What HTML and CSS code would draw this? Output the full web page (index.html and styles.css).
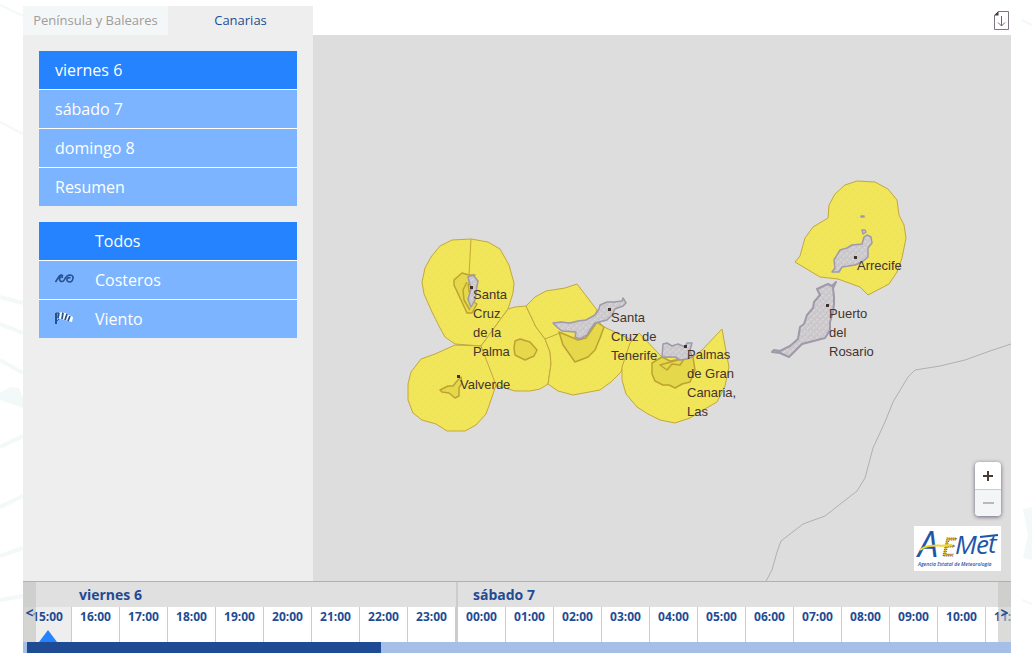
FILE: index.html
```html
<!DOCTYPE html>
<html lang="es">
<head>
<meta charset="utf-8">
<title>Avisos meteorológicos - Canarias</title>
<link rel="stylesheet" href="styles.css">
</head>
<body>
<svg class="backdrop" width="1032" height="667" viewBox="0 0 1032 667" aria-hidden="true">
  <g fill="none" stroke="#f3f8f8" stroke-width="4">
    <path d="M0 360 23 373M0 447 23 436M0 507 23 496M0 556 23 548M0 600 23 596M0 297 23 303M0 324 23 333"/>
    <path d="M0 5 23 16M0 122 23 134M1022 20 1032 25M1022 600 1032 604" stroke-width="2"/>
  </g>
  <path d="M0 393 10 387 19 388 23 398 23 408 0 400zM1023 509 1032 507 1032 560 1023 558 1028 535z" fill="#f3f8f8"/>
</svg>
<main class="viewer">
  <header class="top">
    <nav class="tabs">
      <a class="tab" href="#peninsula">Península y Baleares</a>
      <a class="tab tab-active" href="#canarias">Canarias</a>
    </nav>
    <button class="download" aria-label="Descargar">
      <svg width="15" height="20" viewBox="0 0 15 20"><path d="M4.500.5h10v18H.5v-14z" fill="#fff" stroke="#7d7585"/><path d="M0 4.500 4.500 0v4.500z" fill="#4a3a33"/><path d="M7.500 5v10M4 11.500l3.500 3.500 3.500-3.500" fill="none" stroke="#6b6375"/></svg>
    </button>
  </header>
  <div class="content">
    <aside class="sidebar">
      <div class="menu">
        <button class="item item-active">viernes 6</button>
        <button class="item">sábado 7</button>
        <button class="item">domingo 8</button>
        <button class="item">Resumen</button>
      </div>
      <div class="menu">
        <button class="item item-active"><span class="icon"></span>Todos</button>
        <button class="item"><span class="icon"><svg width="20" height="12" viewBox="0 0 20 12"><g fill="none" stroke="#24518f" stroke-width="1.600"><path d="M.5 9 4 3.500Q6 1 8 3M8 4.500Q5 3 4.500 6 5 9 7.500 8.500 9 8 10 5.500 12 2 15 2 18.500 2.500 18 5 17.500 9 14.500 9 11.500 8.500 12 6 13 4 15.500 5"/></g></svg></span>Costeros</button>
        <button class="item"><span class="icon"><svg width="20" height="12" viewBox="0 0 20 12"><path d="M1 1v11" stroke="#24518f" stroke-width="2"/><path d="M3 1 8 0l10 5-1 5L3 6z" fill="#fff"/><path d="M4 1 3 6M8 .5 7 7M12 2l-2 6M15 4l-2 5" stroke="#24518f" stroke-width="1.800"/><path d="M1 1l3 0M1 10l3-3" stroke="#24518f"/></svg></span>Viento</button>
      </div>
    </aside>
    <section class="map" aria-label="Mapa de avisos">
      <svg class="chart" viewBox="313 35 698 546" preserveAspectRatio="xMidYMid slice">
        <defs>
          <pattern id="relief" width="6" height="6" patternUnits="userSpaceOnUse"><path d="M0 0h6v6H0z" fill="#cccacd"/><path d="M0 2l2-1M3 5l2-2" stroke="#dcdcdc"/><path d="M4 1h1M1 5h1" stroke="#bfbbc4"/></pattern>
          <pattern id="dots" width="8" height="8" patternUnits="userSpaceOnUse"><path d="M0 0h8v8H0z" fill="#f1e55a"/><path d="M1 1h1v1H1zM5 5h1v1H5z" fill="#e9da55"/></pattern>
        </defs>
        <path class="coast" d="M1011 344 990 351 965 360 940 366 915 370 908 377 893 402 885 422 873 448 865 478 857 491 825 516 803 524 781 541 777 552 772 570 766 581"/>
        <g class="zone">
          <path d="M471 239 452 240 440 246 431 257 425 268 422 282 424 294 432 312 440 328 445 337 455 344 481 346 508 309 513 293 514 283 509 265 500 249 488 242z"/>
          <path d="M508 309 515 307 526 306 536 327 545 339 550 352 551 364 548 384 540 389 530 391 515 391 495 385 484 356 481 346z"/>
          <path d="M481 346 455 345 435 354 421 359 411 372 408 384 408 400 413 413 422 420 436 424 447 431 465 431 476 425 486 414 491 400 496 385z"/>
          <path d="M526 306 535 297 546 291 565 288 577 284 597 310 595 315 602 326 632 340 621 372 611 382 600 390 573 395 558 391 548 384 551 364 550 352 545 339 536 327z"/>
          <path d="M639 333 630 343 622 367 622 380 626 394 637 407 648 414 660 420 675 423 690 418 703 410 717 402 725 386 729 367 726 351 722 329 702 350 693 357 662 357z"/>
          <path d="M795 262 800 256 805 238 813 227 828 218 829 205 835 194 845 185 857 181 875 182 888 189 897 200 899 215 904 225 906 238 902 258 897 272 889 284 868 295 860 287 838 279 820 277z"/>
          <path d="M471 239 469 275M545 339 560 333" fill="none"/>
        </g>
        <g class="warned">
          <path d="M469 275 462 273 454 280 454 285 467 313 472 313 477 304 471 300 468 285 475 275z"/>
          <path d="M467 282 463 290 464 300 470 310"/>
          <path d="M515 341 520 339 530 342 537 350 534 356 525 360 515 355 514 348z"/>
          <path d="M440 390 448 386 453 386 457 381 461 377 462 383 459 388 459 396 455 398 449 393 442 392z"/>
          <path d="M559 332 578 340 586 338 597 322 604 327 600 338 595 350 588 357 575 362 568 352 563 345z"/>
          <path d="M662 357 652 363 652 374 655 381 663 385 669 385 675 388 682 384 690 382 695 370 693 357 670 361z"/>
          <path d="M660 365 678 360 684 359 680 365 672 364 667 370z"/>
        </g>
        <g class="land">
          <path d="M468 277 473 275 478 281 477 286 475 300 471 307 468 299 471 289z"/>
          <path d="M553 323 561 322 570 323 578 321 586 320 595 315 599 309 600 305 607 302 614 302 622 301 623 298 626 303 623 306 615 309 612 315 607 320 595 323 590 330 587 335 580 339 575 337 576 332 562 331 558 328z"/>
          <path d="M663 344 667 343 672 346 678 344 685 347 687 343 692 343 690 350 692 357 687 359 680 360 675 357 662 357z"/>
          <path d="M832 272 835 268 834 260 840 250 847 248 852 245 862 244 864 237 867 235 871 237 872 243 868 248 868 257 862 262 855 265 842 267 839 272z"/>
          <path class="fuerteventura" d="M817 289 828 284 832 286 836 282 833 288 834 297 834 304 833 312 830 322 830 330 825 338 802 344 789 357 780 353 772 352 774 350 780 351 790 346 798 339 800 327 804 324 807 315 813 308 814 302 820 295z"/>
          <path d="M861 216h3v1h-3zM862 230l3 0 1 2-3 2z"/>
        </g>
        <g class="city-dot"><path d="M470 286h3v3h-3zM457 375h3v3h-3zM608 308h3v3h-3zM684 345h3v3h-3zM854 256h3v3h-3zM826 304h3v3h-3z"/></g>
        <g class="city">
          <text><tspan x="473" y="299">Santa</tspan><tspan x="473" y="318">Cruz</tspan><tspan x="473" y="337">de la</tspan><tspan x="473" y="356">Palma</tspan></text>
          <text x="460" y="389">Valverde</text>
          <text><tspan x="611" y="322">Santa</tspan><tspan x="611" y="341">Cruz de</tspan><tspan x="611" y="360">Tenerife</tspan></text>
          <text><tspan x="687" y="359">Palmas</tspan><tspan x="687" y="378">de Gran</tspan><tspan x="687" y="397">Canaria,</tspan><tspan x="687" y="416">Las</tspan></text>
          <text x="857" y="270">Arrecife</text>
          <text><tspan x="829" y="318">Puerto</tspan><tspan x="829" y="337">del</tspan><tspan x="829" y="356">Rosario</tspan></text>
        </g>
      </svg>
      <div class="overlay">
        <div class="zoom">
          <button class="zoom-in" aria-label="Acercar"><svg width="12" height="12" viewBox="0 0 12 12"><path d="M6 1v10M1 6h10" stroke="#4a3a33" stroke-width="2"/></svg></button>
          <button class="zoom-out" aria-label="Alejar"><svg width="12" height="12" viewBox="0 0 12 12"><path d="M1 6h11" stroke="#bdb8b8" stroke-width="2"/></svg></button>
        </div>
        <svg class="logo" width="87" height="45" viewBox="0 0 87 45" role="img" aria-label="AEMet">
          <path d="M0 0h87v45H0z" fill="#fff"/>
          <g class="logo-name"><text x="4" y="31" class="logo-a">A</text><text x="28" y="30" class="logo-e">E</text><text x="41" y="28">M</text><text x="62" y="28">e</text><text x="74" y="27">t</text></g>
          <path d="M66 11 84 9" stroke="#1f55a8" stroke-width="2"/>
          <path d="M6 24C15 17 24 21 38 19" fill="none" stroke="#f0d62c" stroke-width="2"/>
          <text class="logo-caption" x="4" y="40">Agencia Estatal de Meteorología</text>
        </svg>
      </div>
    </section>
  </div>
  <section class="timeline" aria-label="Horas">
    <div class="track">
      <div class="day day-first">
        <h2 class="day-name">viernes 6</h2>
        <div class="hours"><button class="hour hour-now">15:00</button><button class="hour">16:00</button><button class="hour">17:00</button><button class="hour">18:00</button><button class="hour">19:00</button><button class="hour">20:00</button><button class="hour">21:00</button><button class="hour">22:00</button><button class="hour">23:00</button></div>
      </div>
      <div class="day">
        <h2 class="day-name">sábado 7</h2>
        <div class="hours"><button class="hour">00:00</button><button class="hour">01:00</button><button class="hour">02:00</button><button class="hour">03:00</button><button class="hour">04:00</button><button class="hour">05:00</button><button class="hour">06:00</button><button class="hour">07:00</button><button class="hour">08:00</button><button class="hour">09:00</button><button class="hour">10:00</button><button class="hour">11:00</button></div>
      </div>
    </div>
    <button class="step step-prev">&lt;</button>
    <button class="step step-next">&gt;</button>
    <div class="scrollbar"><div class="thumb"></div></div>
  </section>
</main>
</body>
</html>
```
FILE: styles.css
```css
* { box-sizing: border-box; }
body {
  margin: 0;
  background: #fff;
  font-family: "Open Sans", "Noto Sans", sans-serif;
  overflow-x: hidden;
}
button {
  margin: 0;
  padding: 0;
  border: 0;
  background: none;
  font: inherit;
  color: inherit;
  cursor: pointer;
}
svg { display: block; }
.backdrop { position: absolute; top: 0; left: 0; z-index: -1; }
.viewer { margin: 6px 21px 0 23px; background: #fff; }
.top { display: flex; justify-content: space-between; align-items: flex-start; }
.tabs { display: flex; width: 290px; }
.tab {
  flex: 1;
  height: 29px;
  background: #f4f7f7;
  color: #a29b9b;
  font-size: 13px;
  line-height: 29px;
  text-align: center;
  text-decoration: none;
  white-space: nowrap;
}
.tab-active { background: #eee; color: #1f4b94; }
.download { padding: 5px 2px 0 0; }
.content { display: flex; }
.sidebar {
  display: flex;
  flex-direction: column;
  gap: 16px;
  flex: none;
  width: 290px;
  padding: 16px;
  background: #eee;
}
.menu { display: flex; flex-direction: column; gap: 1px; background: #fff; }
.item {
  display: flex;
  align-items: center;
  height: 38px;
  padding: 0 16px;
  background: #7cb4ff;
  color: #fff;
  font-size: 16px;
  text-align: left;
}
.item-active { background: #2583ff; }
.icon { width: 40px; padding-bottom: 2px; }
.map { position: relative; flex: 1; min-width: 0; background: #ddd; }
.chart { width: 100%; height: auto; }
.coast { fill: none; stroke: #b0b0b0; }
.zone { fill: url(#dots); stroke: #c2a83c; stroke-linejoin: round; }
.warned { fill: #e5d84b; stroke: #bda232; stroke-width: 1.5; stroke-linejoin: round; }
.land { fill: url(#relief); stroke: #9f99aa; stroke-width: 1.5; stroke-linejoin: round; }
.fuerteventura { stroke-width: 2; }
.city-dot { fill: #403029; }
.city { fill: #43342d; font: 13px "Liberation Sans", Arial, sans-serif; }
.overlay {
  position: absolute;
  right: 10px;
  bottom: 10px;
  display: flex;
  flex-direction: column;
  align-items: flex-end;
  gap: 10px;
}
.zoom {
  display: flex;
  flex-direction: column;
  width: 26px;
  border-radius: 4px;
  background: #fff;
  box-shadow: 0 1px 4px #6b6078;
  overflow: hidden;
}
.zoom button { display: flex; align-items: center; justify-content: center; height: 27px; }
.zoom .zoom-out { border-top: 1px solid #ccc; background: #f3f6f6; }
.logo-name { fill: #1f55a8; font: italic 26px "Open Sans", sans-serif; }
.logo-name .logo-a { font-size: 36px; }
.logo-name .logo-e { fill: #e0c52c; stroke: #5a4a2c; stroke-width: 1; stroke-dasharray: 1 1; }
.logo-caption { fill: #1f55a8; font: italic 600 5px "Open Sans", sans-serif; }
.timeline {
  position: relative;
  border-top: 1px solid #b5afad;
  background: #e0e0e0;
  color: #1f4b94;
  font-weight: 700;
  overflow: hidden;
}
.track { display: flex; padding-left: 1px; }
.day { flex: none; }
.day-first { border-right: 2px solid #ccc; }
.day-name { margin: 0; padding-left: 15px; font-size: 14px; font-weight: 700; line-height: 25px; }
.day-first .day-name { padding-left: 55px; }
.hours { display: flex; }
.hour {
  display: flex;
  flex-direction: column;
  align-items: center;
  width: 48px;
  height: 35px;
  border-right: 1px solid #ccc;
  background: #fff;
  font-size: 12px;
  line-height: 20px;
}
.hour-now { background: #eee; }
.hour-now::after {
  content: "";
  margin-top: auto;
  border: 9px solid transparent;
  border-top: 0;
  border-bottom: 12px solid #2583ff;
}
.step {
  position: absolute;
  top: 0;
  bottom: 11px;
  width: 13px;
  background: rgba(195, 195, 193, 0.6);
  font-size: 14px;
}
.step-prev { left: 0; }
.step-next { right: 0; }
.scrollbar { height: 11px; padding-left: 4px; background: #a6bfe6; }
.thumb { width: 36%; height: 11px; background: #1f4b94; }
```
